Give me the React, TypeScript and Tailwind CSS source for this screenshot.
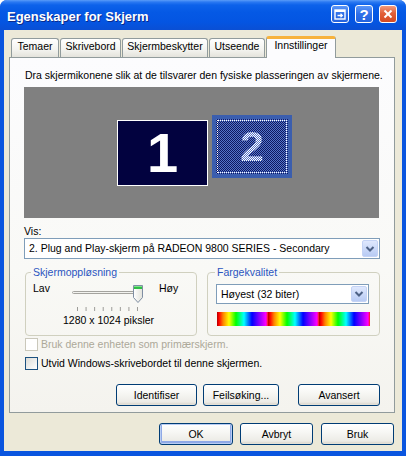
import React from "react";

function XPButton({ w, label, def }: { w: string; label: string; def?: boolean }) {
  return (
    <div
      className={`${w} h-[22px] rounded-[3px] border border-[#003c74] flex items-center justify-center bg-[linear-gradient(#ffffff_0%,#f7f7f4_40%,#ecebe6_85%,#d6d0c5_100%)] ${
        def ? "shadow-[inset_0_0_0_1px_#b9cdf3,inset_0_-1px_0_2px_#8fa9e6]" : "shadow-[inset_0_-1px_0_#e3e0d7]"
      }`}
    >
      <span>{label}</span>
    </div>
  );
}

function Chevron() {
  return (
    <div className="w-[16px] h-full rounded-[2px] border border-[#c4d3f5] bg-[linear-gradient(#dfe8fd,#b8cbf4)] flex items-center justify-center">
      <svg width="10" height="8" viewBox="0 0 10 8">
        <polyline points="1.5,2 5,5.5 8.5,2" fill="none" stroke="#4d6185" strokeWidth="2" />
      </svg>
    </div>
  );
}

function Tab({ w, ml, label }: { w: string; ml: string; label: string }) {
  return (
    <div
      className={`${w} ${ml} h-[19px] rounded-t-[3px] border border-b-0 border-[#919b9c] bg-[linear-gradient(#ffffff,#f3f3ef_60%,#e4e3dc)] flex justify-center pt-[1px]`}
    >
      {label}
    </div>
  );
}

export default function App() {
  const ticks = Array.from({ length: 8 }, (_, i) => 5.5 + i * 8.57);
  return (
    <div className="w-[406px] h-[456px] bg-white font-['Liberation_Sans',Arial,sans-serif] text-[10.5px] leading-[13px] text-black">
      <div className="w-full h-full flex flex-col rounded-t-[7px] overflow-hidden bg-[#0a55df]">
        {/* Title bar */}
        <div className="h-[30px] shrink-0 flex items-start pl-[7px] pr-[9px] pt-[5px] bg-[linear-gradient(#5a9cf8_0px,#2b79f2_2px,#0d62ea_5px,#0559e5_12px,#0455e2_22px,#0a4fd4_30px)]">
          <span className="mt-[4px] text-white font-bold text-[13px] leading-[15px] [text-shadow:1px_1px_0_#0b2a8a]">
            Egenskaper for Skjerm
          </span>
          <div className="ml-auto flex gap-[6px]">
            <div className="w-[18px] h-[18px] rounded-[3px] border border-white bg-[linear-gradient(#5c97f8,#2f6fe8_50%,#2463de)] flex items-center justify-center">
              <svg width="12" height="11" viewBox="0 0 12 11">
                <rect x="1" y="1" width="10" height="9" fill="none" stroke="white" strokeWidth="1.4" />
                <rect x="1" y="1" width="10" height="2" fill="white" />
                <line x1="3.5" y1="6.5" x2="8" y2="6.5" stroke="white" strokeWidth="1.4" />
                <polyline points="6.5,4.8 8.3,6.5 6.5,8.2" fill="none" stroke="white" strokeWidth="1.3" />
              </svg>
            </div>
            <div className="w-[18px] h-[18px] rounded-[3px] border border-white bg-[linear-gradient(#5c97f8,#2f6fe8_50%,#2463de)] flex items-center justify-center text-white font-bold text-[15px] leading-[15px]">
              ?
            </div>
            <div className="w-[18px] h-[18px] rounded-[3px] border border-white bg-[linear-gradient(#f09a7c,#e2603a_45%,#d54a22)] flex items-center justify-center">
              <svg width="10" height="10" viewBox="0 0 10 10">
                <line x1="1.5" y1="1.5" x2="8.5" y2="8.5" stroke="white" strokeWidth="2" />
                <line x1="8.5" y1="1.5" x2="1.5" y2="8.5" stroke="white" strokeWidth="2" />
              </svg>
            </div>
          </div>
        </div>

        {/* Frame */}
        <div className="flex-1 flex flex-col pl-[4px] pr-[4px] pb-[5px] bg-[#0a55df]">
          <div className="flex-1 flex flex-col bg-[#ece9d8] pt-[6px] pl-[5px]">
            {/* Tabs */}
            <div className="flex items-end h-[21px] ml-[2px]">
              <Tab w="w-[48px]" ml="ml-0" label="Temaer" />
              <Tab w="w-[61px]" ml="ml-[1px]" label="Skrivebord" />
              <Tab w="w-[86px]" ml="ml-[1px]" label="Skjermbeskytter" />
              <Tab w="w-[56px]" ml="ml-[1px]" label="Utseende" />
              <div className="relative z-10 w-[70px] ml-[1px] h-[22px] -mb-[1px] rounded-t-[3px] border border-b-0 border-[#919b9c] border-t-[3px] border-t-[#f7b23c] bg-[#fcfcfe] flex justify-center">
                Innstillinger
              </div>
            </div>

            {/* Panel */}
            <div className="w-[386px] h-[356px] border border-[#919b9c] bg-[linear-gradient(#fcfcfe,#f9f9f6_60%,#f4f3ee)] pl-[14px] pr-[14px] pt-[11px] flex flex-col">
              <div className="ml-[1px] whitespace-nowrap">Dra skjermikonene slik at de tilsvarer den fysiske plasseringen av skjermene.</div>
              <div className="relative mt-[5px] w-[355px] h-[131px] bg-[#808080]">
                <div className="absolute left-[93px] top-[33px] w-[91px] h-[66px] bg-[#02023f] border border-white flex items-center justify-center">
                  <span className="text-white font-bold text-[56px] leading-[56px] font-['Liberation_Sans',Arial,sans-serif]">1</span>
                </div>
                <div className="absolute left-[188px] top-[28px] w-[80px] h-[63px] border-[4px] border-[#3b5eae] bg-[conic-gradient(#0d1860_25%,#5574c8_0_50%,#0d1860_0_75%,#5574c8_0)] bg-[length:2px_2px] p-[1px]">
                  <div className="w-full h-full border border-dotted border-white flex items-center justify-center">
                    <span className="font-bold text-[43px] leading-[43px] bg-[conic-gradient(#ffffff_25%,#5574c8_0_50%,#ffffff_0_75%,#5574c8_0)] bg-[length:2px_2px] bg-clip-text text-transparent">
                      2
                    </span>
                  </div>
                </div>
              </div>

              <div className="mt-[7px]">Vis:</div>
              <div className="w-[356px] h-[21px] border border-[#7f9db9] bg-white flex items-center p-[1px]">
                <span className="flex-1 pl-[3px]">2. Plug and Play-skjerm på RADEON 9800 SERIES - Secondary</span>
                <Chevron />
              </div>

              {/* Groups */}
              <div className="mt-[7px] ml-[1px] flex gap-[10px]">
                <fieldset className="w-[172px] border border-[#d0d0bf] rounded-[4px] pl-[5px] pr-[5px] pb-[8px]">
                  <legend className="px-[2px] text-[#2a55c0]">Skjermoppløsning</legend>
                  <div className="pl-[2px]">
                    <div className="mt-[3px] flex items-start">
                      <span className="w-[39px]">Lav</span>
                      <svg width="72" height="30" viewBox="0 0 72 30">
                        <defs>
                          <linearGradient id="thumb" x1="0" y1="0" x2="1" y2="0">
                            <stop offset="0" stopColor="#ffffff" />
                            <stop offset="1" stopColor="#e2e2da" />
                          </linearGradient>
                        </defs>
                        <rect x="0.5" y="9.5" width="65" height="2" rx="1" fill="#f3f3ef" stroke="#a4a39e" />
                        <path d="M61.5 3.5 h9 v12 l-4.5 5 l-4.5 -5 z" fill="url(#thumb)" stroke="#7f8ea3" />
                        <rect x="62" y="4" width="8" height="3" fill="#2fbf45" />
                        <rect x="62" y="4" width="8" height="1" fill="#7fe08a" />
                        {ticks.map((x, i) => (
                          <line key={i} x1={x} y1="25" x2={x} y2="29" stroke="#9d9c99" strokeWidth="1" />
                        ))}
                      </svg>
                      <span className="ml-[15px]">Høy</span>
                    </div>
                    <div className="mt-[2px] ml-[30px]">1280 x 1024 piksler</div>
                  </div>
                </fieldset>
                <fieldset className="w-[173px] border border-[#d0d0bf] rounded-[4px] pl-[7px] pr-[7px] pb-[9px]">
                  <legend className="px-[2px] text-[#2a55c0]">Fargekvalitet</legend>
                  <div className="ml-[1px] mt-[5px] w-[153px] h-[20px] border border-[#7f9db9] bg-white flex items-center p-[1px]">
                    <span className="flex-1 pl-[3px]">Høyest (32 biter)</span>
                    <Chevron />
                  </div>
                  <div className="ml-[2px] mt-[8px] w-[153px] h-[14px] bg-[repeating-linear-gradient(90deg,#b00000_0px,#ff0000_2px,#ff8000_6px,#ffff00_12px,#00ff00_19px,#00ffff_27px,#0000ff_35px,#8000ff_42px,#ff00ff_49px,#ff2000_51px)]" />
                </fieldset>
              </div>

              {/* Checkboxes */}
              <div className="mt-[2px] ml-[1px] flex items-center h-[13px]">
                <div className="w-[13px] h-[13px] border border-[#cac8bb] bg-white" />
                <span className="ml-[3px] text-[#aca899]">Bruk denne enheten som primærskjerm.</span>
              </div>
              <div className="mt-[6px] ml-[1px] flex items-center h-[13px]">
                <div className="w-[13px] h-[13px] border border-[#1c5180] bg-[linear-gradient(135deg,#dcdcd7,#ffffff)]" />
                <span className="ml-[3px]">Utvid Windows-skrivebordet til denne skjermen.</span>
              </div>

              {/* Panel buttons */}
              <div className="mt-[14px] flex justify-end">
                <XPButton w="w-[81px]" label="Identifiser" />
                <div className="ml-[6px]">
                  <XPButton w="w-[76px]" label="Feilsøking..." />
                </div>
                <div className="ml-[19px]">
                  <XPButton w="w-[82px]" label="Avansert" />
                </div>
              </div>
            </div>

            {/* Dialog buttons */}
            <div className="mt-[10px] flex justify-end pr-[8px]">
              <XPButton w="w-[74px]" label="OK" def />
              <div className="ml-[7px]">
                <XPButton w="w-[73px]" label="Avbryt" />
              </div>
              <div className="ml-[8px]">
                <XPButton w="w-[73px]" label="Bruk" />
              </div>
            </div>
          </div>
        </div>
      </div>
    </div>
  );
}
